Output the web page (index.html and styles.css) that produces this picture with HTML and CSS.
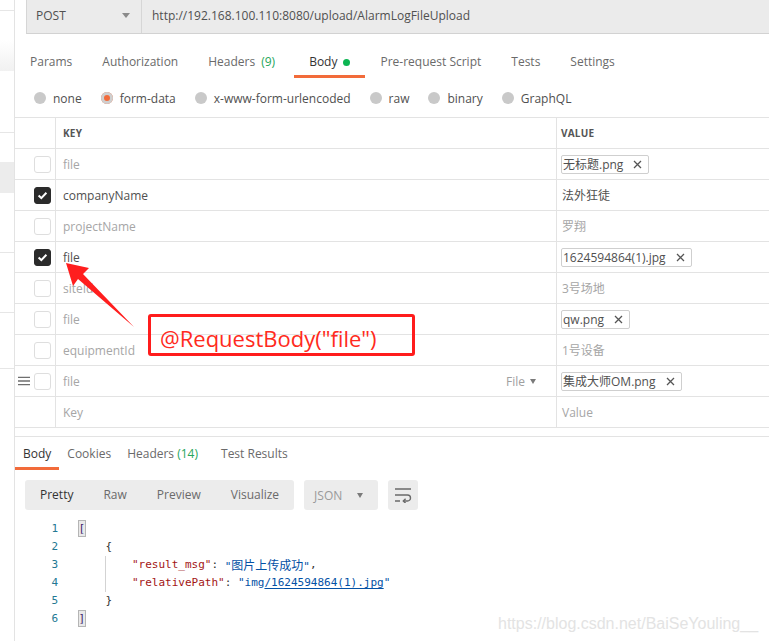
FILE: index.html
```html
<!DOCTYPE html>
<html lang="en">
<head>
<meta charset="utf-8">
<title>Postman</title>
<link rel="stylesheet" href="styles.css">
</head>
<body>
<div class="app">
  <aside class="side">
    <div class="side-rule r1"></div>
    <div class="side-shade"></div>
    <div class="side-rule r2"></div>
    <div class="side-item"></div>
    <div class="side-rule r3"></div>
    <div class="side-rule r4"></div>
    <div class="side-rule r5"></div>
  </aside>
  <main class="main">
    <div class="urlbar">
      <div class="method"><span>POST</span><span class="caret"></span></div>
      <div class="url">http://192.168.100.110:8080/upload/AlarmLogFileUpload</div>
    </div>
    <nav class="tabs">
      <span class="tab">Params</span>
      <span class="tab">Authorization</span>
      <span class="tab wide">Headers<span class="count">(9)</span></span>
      <span class="tab active">Body<span class="dot"></span></span>
      <span class="tab">Pre-request Script</span>
      <span class="tab">Tests</span>
      <span class="tab">Settings</span>
    </nav>
    <div class="radios">
      <span class="radio"><span class="rb"></span>none</span>
      <span class="radio"><span class="rb on"></span>form-data</span>
      <span class="radio"><span class="rb"></span>x-www-form-urlencoded</span>
      <span class="radio"><span class="rb"></span>raw</span>
      <span class="radio"><span class="rb"></span>binary</span>
      <span class="radio"><span class="rb"></span>GraphQL</span>
    </div>
    <div class="kv">
      <div class="row head">
        <div class="c-chk"></div>
        <div class="c-key">KEY</div>
        <div class="c-val">VALUE</div>
      </div>
      <div class="row off">
        <div class="c-chk"><span class="cb"></span></div>
        <div class="c-key">file</div>
        <div class="c-val"><span class="chip">无标题.png<svg class="x" width="9" height="9" viewBox="0 0 9 9"><path d="M1 1L8 8M8 1L1 8" stroke="#555" stroke-width="1.3"/></svg></span></div>
      </div>
      <div class="row">
        <div class="c-chk"><span class="cb on"><svg width="15" height="15" viewBox="0 0 15 15"><path d="M3.6 7.6L6.3 10.1L11.4 4.8" fill="none" stroke="#fff" stroke-width="2"/></svg></span></div>
        <div class="c-key">companyName</div>
        <div class="c-val">法外狂徒</div>
      </div>
      <div class="row off">
        <div class="c-chk"><span class="cb"></span></div>
        <div class="c-key">projectName</div>
        <div class="c-val">罗翔</div>
      </div>
      <div class="row">
        <div class="c-chk"><span class="cb on"><svg width="15" height="15" viewBox="0 0 15 15"><path d="M3.6 7.6L6.3 10.1L11.4 4.8" fill="none" stroke="#fff" stroke-width="2"/></svg></span></div>
        <div class="c-key">file</div>
        <div class="c-val"><span class="chip">1624594864(1).jpg<svg class="x" width="9" height="9" viewBox="0 0 9 9"><path d="M1 1L8 8M8 1L1 8" stroke="#555" stroke-width="1.3"/></svg></span></div>
      </div>
      <div class="row off">
        <div class="c-chk"><span class="cb"></span></div>
        <div class="c-key">siteId</div>
        <div class="c-val">3号场地</div>
      </div>
      <div class="row off">
        <div class="c-chk"><span class="cb"></span></div>
        <div class="c-key">file</div>
        <div class="c-val"><span class="chip">qw.png<svg class="x" width="9" height="9" viewBox="0 0 9 9"><path d="M1 1L8 8M8 1L1 8" stroke="#555" stroke-width="1.3"/></svg></span></div>
      </div>
      <div class="row off">
        <div class="c-chk"><span class="cb"></span></div>
        <div class="c-key">equipmentId</div>
        <div class="c-val">1号设备</div>
      </div>
      <div class="row off">
        <div class="c-chk drag"><svg class="handle" width="12" height="10" viewBox="0 0 12 10"><path d="M0 1.3H12M0 5H12M0 8.7H12" stroke="#6f6f6f" stroke-width="1.3"/></svg><span class="cb"></span></div>
        <div class="c-key"><span>file</span><span class="type">File<span class="caret small"></span></span></div>
        <div class="c-val"><span class="chip">集成大师OM.png<svg class="x" width="9" height="9" viewBox="0 0 9 9"><path d="M1 1L8 8M8 1L1 8" stroke="#555" stroke-width="1.3"/></svg></span></div>
      </div>
      <div class="row off ph">
        <div class="c-chk"></div>
        <div class="c-key">Key</div>
        <div class="c-val">Value</div>
      </div>
    </div>

    <section class="resp">
      <nav class="rtabs">
        <span class="rtab active">Body</span>
        <span class="rtab">Cookies</span>
        <span class="rtab wide">Headers <span class="count">(14)</span></span>
        <span class="rtab">Test Results</span>
      </nav>
      <div class="toolbar">
        <div class="seg">
          <span class="seg-item active">Pretty</span>
          <span class="seg-item">Raw</span>
          <span class="seg-item">Preview</span>
          <span class="seg-item">Visualize</span>
        </div>
        <div class="json"><span>JSON</span><span class="caret small"></span></div>
        <div class="wrapbtn"><svg width="18" height="16" viewBox="0 0 18 16"><path d="M1 2H17M1 8H13.5A3 3 0 0 1 13.5 14H9.5M1 14H6" fill="none" stroke="#6a6a6a" stroke-width="1.4"/><path d="M11.6 11.8L9.3 14L11.6 16.2" fill="none" stroke="#6a6a6a" stroke-width="1.4"/></svg></div>
      </div>
      <div class="code">
        <div class="line"><span class="num">1</span><span class="src"><span class="bm">[</span></span></div>
        <div class="line"><span class="num">2</span><span class="src"><span class="ind"></span>{</span></div>
        <div class="line"><span class="num">3</span><span class="src"><span class="ind"></span><span class="ind guide"></span><span class="k">"result_msg"</span>: <span class="s">"<span class="cjk">图片上传成功</span>"</span>,</span></div>
        <div class="line"><span class="num">4</span><span class="src"><span class="ind"></span><span class="ind guide"></span><span class="k">"relativePath"</span>: <span class="s">"img<span class="link">/1624594864(1).jpg</span>"</span></span></div>
        <div class="line"><span class="num">5</span><span class="src"><span class="ind"></span>}</span></div>
        <div class="line"><span class="num">6</span><span class="src"><span class="bm">]</span></span></div>
      </div>
    </section>
  </main>

  <svg class="arrow" width="769" height="641" viewBox="0 0 769 641">
    <polygon points="66,263 89,268 83,274 134,327 78,279 73,286" fill="#ff1e1e"/>
  </svg>
  <div class="note">@RequestBody("file")</div>
  <div class="watermark">https://blog.csdn.net/BaiSeYouling__</div>
</div>
</body>
</html>
```
FILE: styles.css
```css
* { box-sizing: border-box; margin: 0; padding: 0; }
html, body { height: 100%; }
body {
  font-family: "Open Sans", "Noto Sans CJK SC", sans-serif;
  font-size: 12px;
  color: #505050;
  background: #fff;
  overflow: hidden;
}
.app { position: relative; display: flex; width: 769px; height: 641px; }

/* left sliver of sidebar */
.side { width: 15px; flex: none; border-right: 1px solid #e3e3e3; display: flex; flex-direction: column; }
.side-rule { height: 1px; background: #e6e6e6; flex: none; }
.r1 { margin-top: 10px; }
.side-shade { margin-top: 29px; height: 31px; background: linear-gradient(#fff, #f1f1f1); }
.r2 { margin-top: 61px; }
.side-item { margin-top: 29px; height: 31px; background: #ececec; }
.r3 { margin-top: 59px; }
.r4 { margin-top: 59px; }
.r5 { margin-top: 55px; }

.main { flex: 1; min-width: 0; display: flex; flex-direction: column; }

/* url bar */
.urlbar {
  margin-left: 11px;
  height: 34px;
  display: flex;
  background: #ebebeb;
  border-left: 1px solid #d6d6d6;
  border-bottom: 1px solid #d2d2d2;
}
.method {
  width: 115px;
  display: flex;
  align-items: center;
  justify-content: space-between;
  padding: 0 11px 3px 9px;
  border-right: 1px solid #d6d6d6;
  color: #505050;
}
.url { display: flex; align-items: center; padding: 0 0 3px 10px; color: #505050; white-space: nowrap; }
.caret {
  width: 0; height: 0;
  border-left: 4.5px solid transparent;
  border-right: 4.5px solid transparent;
  border-top: 5px solid #8a8a8a;
}
.caret.small { border-left-width: 3.5px; border-right-width: 3.5px; border-top-width: 5px; border-top-color: #7a7a7a; }

/* request tabs */
.tabs { display: flex; }
.tab {
  padding: 19px 15px 4px;
  line-height: 18px;
  border-bottom: 3px solid transparent;
  color: #6a6a6a;
  white-space: nowrap;
  display: flex;
  align-items: center;
}
.tab.wide { padding-right: 19px; }
.tab.active { color: #333; border-bottom-color: #f26b3a; }
.count { color: #26a65b; margin-left: 6px; }
.dot { width: 7px; height: 7px; border-radius: 50%; background: #0cb552; margin-left: 6px; }

/* radios */
.radios { height: 40px; display: flex; align-items: center; padding-left: 19px; }
.radio { display: flex; align-items: center; margin-right: 19px; color: #505050; white-space: nowrap; }
.rb { width: 12px; height: 12px; border-radius: 50%; background: #c9c9c9; margin-right: 7px; }
.rb.on { background: #f26b3a; box-shadow: inset 0 0 0 3px #cfcfcf; }

/* key-value table */
.kv { border-top: 1px solid #e3e3e3; margin-top: -1px; }
.row {
  display: grid;
  grid-template-columns: 41px 501px 1fr;
  height: 31px;
  border-bottom: 1px solid #e3e3e3;
  color: #505050;
}
.row > div { display: flex; align-items: center; white-space: nowrap; }
.c-chk { padding-left: 19px; border-right: 1px solid #e3e3e3; }
.c-chk.drag { padding-left: 3px; }
.handle { margin-right: 4px; }
.c-key { padding: 0 20px 0 7px; border-right: 1px solid #e3e3e3; justify-content: space-between; }
.c-val { padding-left: 5px; }
.head .c-key, .head .c-val { font-size: 10px; font-weight: 700; color: #555; letter-spacing: 0.2px; }
.head .c-val { padding-left: 4px; }
.off .c-key, .off .c-val { color: #a6a6a6; }
.off .c-val .chip { color: #505050; }
.type { display: flex; align-items: center; color: #a0a0a0; }
.type .caret { margin-left: 5px; }

.cb { width: 17px; height: 17px; border: 1px solid #dedede; border-radius: 3px; background: #fff; display: flex; align-items: center; justify-content: center; }
.cb.on { background: #2b2b2b; border-color: #2b2b2b; }

.chip {
  display: inline-flex;
  align-items: center;
  height: 19px;
  margin-left: -1px;
  padding: 0 6px 0 1px;
  border: 1px solid #cfcfcf;
  border-radius: 2px;
  color: #505050;
}
.chip .x { margin-left: 10px; }

/* response */
.resp { margin-top: 8px; border-top: 1px solid #e3e3e3; display: flex; flex-direction: column; }
.rtabs { display: flex; }
.rtab {
  padding: 8px 8px 5px;
  line-height: 17px;
  border-bottom: 3px solid transparent;
  color: #6a6a6a;
  white-space: nowrap;
}
.rtab.wide { padding-right: 15px; }
.rtab .count { margin-left: 0; }
.rtab.active { color: #333; border-bottom-color: #f26b3a; }

.toolbar { display: flex; margin: 10px 0 0 10px; height: 30px; gap: 10px; }
.seg { display: flex; background: #ececec; border-radius: 3px; }
.seg-item { padding: 0 15px; line-height: 30px; color: #6a6a6a; }
.seg-item.active { color: #333; }
.json {
  width: 74px;
  display: flex;
  align-items: center;
  justify-content: space-between;
  padding: 0 15px 0 10px;
  background: #ececec;
  border-radius: 3px;
  color: #9a9a9a;
}
.wrapbtn { width: 30px; display: flex; align-items: center; justify-content: center; background: #ececec; border-radius: 3px; }

.code { margin-top: 10px; font-family: "DejaVu Sans Mono", "Liberation Mono", "Noto Sans CJK SC", monospace; font-size: 11px; }
.line { display: flex; height: 18px; line-height: 18px; white-space: pre; }
.num { width: 43px; text-align: right; color: #237893; flex: none; }
.src { padding-left: 21px; color: #333; display: flex; }
.bm { display: inline-block; height: 17px; line-height: 17px; background: #e9e9e9; box-shadow: inset 0 0 0 1px #b5b5b5; color: #3e1e6e; padding: 0 0.5px; margin-left: -1px; }
.ind { display: inline-block; width: 4ch; height: 18px; flex: none; }
.ind.guide { box-shadow: inset 1px 0 0 #d3d3d3; }
.k { color: #a31515; }
.s { color: #0451a5; }
.cjk { font-family: "Noto Sans CJK SC", sans-serif; font-size: 12px; }
.link { text-decoration: underline; text-underline-offset: 2px; }

/* annotation overlay */
.arrow { position: absolute; left: 0; top: 0; pointer-events: none; }
.note {
  position: absolute;
  left: 148px;
  top: 314px;
  width: 267px;
  height: 42px;
  border: 3px solid #ff1c1c;
  border-radius: 3px;
  padding: 10px 0 0 9px;
  font-family: "Open Sans", sans-serif;
  font-size: 22px;
  line-height: 22px;
  color: #ff2a20;
  white-space: nowrap;
}
.watermark {
  position: absolute;
  left: 498px;
  top: 615px;
  font-family: "Liberation Sans", Arial, sans-serif;
  font-size: 16px;
  line-height: 18px;
  color: #e3e3e3;
  white-space: nowrap;
}
```
